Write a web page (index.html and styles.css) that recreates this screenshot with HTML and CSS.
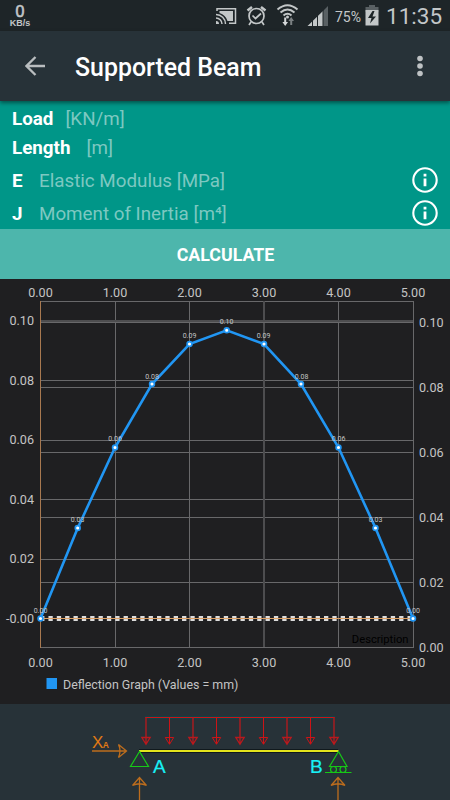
FILE: index.html
```html
<!DOCTYPE html>
<html lang="en">
<head>
    <meta charset="UTF-8">
    <meta name="viewport" content="width=device-width, initial-scale=1.0">
    <title>Supported Beam</title>
    <link rel="stylesheet" href="styles.css">
</head>
<body>
    <div class="status-bar">
        <svg class="net-speed" width="40" height="31" viewBox="0 0 40 31">
            <text class="net-value" x="20" y="16.800">0</text>
            <text class="net-unit" x="20" y="26">KB/s</text>
        </svg>
        <div class="status-icons">
            <svg class="status-svg" width="128" height="32" viewBox="211 0 128 32">
                <!-- cast -->
                <g fill="none" stroke="#c3c7c8" stroke-width="1.5">
                    <path d="M217 11V8.7H235.500V23.300H229"/>
                    <path d="M216 14.500A9.500 9.500 0 0 1 225.500 24M216 18A6 6 0 0 1 222 24"/>
                </g>
                <path d="M216 21A3 3 0 0 1 219 24H216ZM219.500 11H233V21H227.500A12 12 0 0 0 219.500 13Z" fill="#c3c7c8"/>
                <!-- alarm -->
                <g fill="none" stroke="#c3c7c8" stroke-width="1.700">
                    <circle cx="256.500" cy="16" r="7.500"/>
                    <path d="M252.500 15.500L255.500 18.500L261 13.500M251 22L249 25M262 22L264 25"/>
                    <path d="M247.500 10.500L252 7M265.500 10.500L261 7" stroke-width="2.500"/>
                </g>
                <!-- wifi -->
                <g fill="none" stroke="#c3c7c8" stroke-width="2">
                    <path d="M277.500 9.500Q287.500 1 297.500 9.500M280.500 12.500Q287.500 6.500 294.500 12.500M283.500 15.500Q287.500 12 291.500 15.500"/>
                </g>
                <circle cx="287.500" cy="17" r="1.500" fill="#c3c7c8"/>
                <path d="M284.200 17.500H286.200V22H288L285.200 26L282.400 22H284.200Z" fill="#d5d8d9"/>
                <path d="M290.200 25V21H288.400L291.200 17L294 21H292.200V25Z" fill="#7b8082"/>
                <!-- signal -->
                <path d="M307.500 26L323 11V26Z" fill="#c3c7c8"/>
                <path d="M323 11L328 6V26H323Z" fill="#596063"/>
                <path d="M312.500 19V26M317.500 15V26M323 10V26" stroke="#1e2528" stroke-width="1"/>
            </svg>
            <span class="battery-text">75%</span>
            <svg class="battery" width="14" height="21" viewBox="0 0 14 21">
                <path d="M4 0H10V2H13.500V7H.5V2H4Z" fill="#596063"/>
                <path d="M.5 5H13.500V20.500H.5Z" fill="#c3c7c8"/>
                <path d="M7.500 6L3 13H6.500L5 18.500L11 11.500H7.500L9.500 6Z" fill="#1e2528"/>
            </svg>
            <span class="clock">11:35</span>
        </div>
    </div>

    <header class="toolbar">
        <svg class="back-icon" width="21" height="20" viewBox="0 0 21 20">
            <path d="M20 10H2M10.500 1L1.500 10L10.500 19" fill="none" stroke="#b9bdbf" stroke-width="2.300"/>
        </svg>
        <h1>Supported Beam</h1>
        <svg class="menu-icon" width="6" height="22" viewBox="0 0 6 22">
            <g fill="#bec2c4">
                <circle cx="3" cy="3.500" r="2.800"/>
                <circle cx="3" cy="11" r="2.800"/>
                <circle cx="3" cy="18.500" r="2.800"/>
            </g>
        </svg>
    </header>

    <div class="params">
        <div class="param-row">
            <span class="param-name">Load</span>
            <span class="param-hint">[KN/m]</span>
        </div>
        <div class="param-row length">
            <span class="param-name">Length</span>
            <span class="param-hint">[m]</span>
        </div>
        <div class="param-row tall">
            <span class="param-name">E</span>
            <span class="param-hint">Elastic Modulus [MPa]</span>
            <svg class="info" width="26" height="26" viewBox="0 0 26 26">
                <circle cx="13" cy="13" r="11.700" fill="none" stroke="#fff" stroke-width="2.100"/>
                <path d="M11.600 6.700H14.400V9.500H11.600ZM11.600 11.500H14.400V19.300H11.600Z" fill="#fff"/>
            </svg>
        </div>
        <div class="param-row tall">
            <span class="param-name">J</span>
            <span class="param-hint">Moment of Inertia [m⁴]</span>
            <svg class="info" width="26" height="26" viewBox="0 0 26 26">
                <circle cx="13" cy="13" r="11.700" fill="none" stroke="#fff" stroke-width="2.100"/>
                <path d="M11.600 6.700H14.400V9.500H11.600ZM11.600 11.500H14.400V19.300H11.600Z" fill="#fff"/>
            </svg>
        </div>
    </div>

    <button class="calculate">CALCULATE</button>

    <svg class="chart" width="450" height="425" viewBox="0 279 450 425">
        <g class="grid">
            <path d="M40 301.500H413M40 380.500H413M40 440.500H413M40 499.500H413M40 559.500H413"/>
            <path d="M40 387.500H413M40 452.500H413M40 517.500H413M40 582.500H413M40 647.500H413"/>
            <path d="M115.500 301V647M189.500 301V647M338.500 301V647M413.500 301V648"/>
            <path class="thick" d="M40 321H413M264 301V647"/>
            <path d="M40 322.500H413"/>
        </g>
        <path class="axis" d="M40.500 301V648"/>
        <path class="zero-dash" d="M40.100 618.500H413"/>
        <path class="zero-line" d="M40 618.500H413"/>
        <text class="description" x="408.500" y="643">Description</text>

        <polyline class="curve" points="40.500,618.500 77.700,528 115,447.500 152,384 189.500,344 226.700,330.300 264,344 301,384 338.500,447.500 375.500,528 413,618.500"/>
        <g class="points">
            <circle cx="40.500" cy="618.500" r="2.400"/>
            <circle cx="77.700" cy="528" r="2.400"/>
            <circle cx="115" cy="447.500" r="2.400"/>
            <circle cx="152" cy="384" r="2.400"/>
            <circle cx="189.500" cy="344" r="2.400"/>
            <circle cx="226.700" cy="330.300" r="2.400"/>
            <circle cx="264" cy="344" r="2.400"/>
            <circle cx="301" cy="384" r="2.400"/>
            <circle cx="338.500" cy="447.500" r="2.400"/>
            <circle cx="375.500" cy="528" r="2.400"/>
            <circle cx="413" cy="618.500" r="2.400"/>
        </g>
        <g class="values">
            <text x="40.500" y="613">0.00</text>
            <text x="77.500" y="522">0.03</text>
            <text x="115" y="441.300">0.06</text>
            <text x="152" y="378.500">0.08</text>
            <text x="189.500" y="338">0.09</text>
            <text x="226.500" y="324">0.10</text>
            <text x="263.500" y="338">0.09</text>
            <text x="301.500" y="378.500">0.08</text>
            <text x="338.500" y="441.300">0.06</text>
            <text x="375.500" y="522">0.03</text>
            <text x="413" y="613">0.00</text>
        </g>

        <g class="labels x-labels">
            <text x="40.500" y="296.500">0.00</text>
            <text x="115" y="296.500">1.00</text>
            <text x="189.500" y="296.500">2.00</text>
            <text x="264" y="296.500">3.00</text>
            <text x="338.500" y="296.500">4.00</text>
            <text x="413" y="296.500">5.00</text>
            <text x="40.500" y="666.500">0.00</text>
            <text x="115" y="666.500">1.00</text>
            <text x="189.500" y="666.500">2.00</text>
            <text x="264" y="666.500">3.00</text>
            <text x="338.500" y="666.500">4.00</text>
            <text x="413" y="666.500">5.00</text>
        </g>
        <g class="labels left-labels">
            <text x="34" y="325">0.10</text>
            <text x="34" y="384.500">0.08</text>
            <text x="34" y="444">0.06</text>
            <text x="34" y="503.500">0.04</text>
            <text x="34" y="563">0.02</text>
            <text x="34" y="622.500">-0.00</text>
        </g>
        <g class="labels">
            <text x="419" y="326.500">0.10</text>
            <text x="419" y="391.500">0.08</text>
            <text x="419" y="456.500">0.06</text>
            <text x="419" y="521.500">0.04</text>
            <text x="419" y="586.500">0.02</text>
            <text x="419" y="651.500">0.00</text>
        </g>
        <rect x="46.500" y="678" width="10.500" height="11" fill="#2196f3"/>
        <text class="legend" x="63" y="688.500">Deflection Graph (Values = mm)</text>
    </svg>

    <svg class="beam" width="450" height="96" viewBox="0 704 450 96">
        <defs>
            <g id="load-arrow">
                <path d="M0 717V744M-4.200 737.500H4.200L0 744.300Z"/>
            </g>
            <g id="reaction">
                <path d="M0 778V800M-7 785.500L0 777.500L7 785.500Q0 782 -7 785.500Z"/>
            </g>
        </defs>
        <path class="load-edge" d="M145 716.500H335M147 718.500H333"/>
        <g class="load">
            <path d="M145.500 717.500H334.500"/>
            <use href="#load-arrow" x="146" class="wide"/>
            <use href="#load-arrow" x="169.500"/>
            <use href="#load-arrow" x="193" class="wide"/>
            <use href="#load-arrow" x="216.500"/>
            <use href="#load-arrow" x="240" class="wide"/>
            <use href="#load-arrow" x="263.500"/>
            <use href="#load-arrow" x="287" class="wide"/>
            <use href="#load-arrow" x="310.500"/>
            <use href="#load-arrow" x="334" class="wide"/>
        </g>
        <path d="M139 751H338" stroke="#10191d" stroke-width="4"/>
        <path d="M139 751H338.500" stroke="#e4e41c" stroke-width="2"/>
        <g class="support">
            <path d="M139.500 751.500L130.500 766.500H148.500Z"/>
            <path d="M338.500 751.500L329.500 766.500H347L338.500 751.500M325 772.500H351.500"/>
            <circle cx="333.500" cy="769.500" r="3"/>
            <circle cx="343" cy="769.500" r="3"/>
        </g>
        <g class="reaction">
            <path d="M92 751H126M118.500 744.500L126.500 751L118.500 757.500Q121.500 751 118.500 744.500Z"/>
            <use href="#reaction" x="139.500"/>
            <use href="#reaction" x="338"/>
        </g>
        <text class="reaction-name" x="92" y="748">X<tspan class="sub" dx="-.5">A</tspan></text>
        <text class="node-name" x="153" y="773">A</text>
        <text class="node-name" x="310" y="773">B</text>
    </svg>
</body>
</html>
```
FILE: styles.css
```css
body {
    font-family: Roboto, sans-serif;
    margin: 0;
    padding: 0;
    background-color: #273238;
    color: #fff;
    overflow: hidden;
}

svg {
    display: block;
    flex-shrink: 0;
}

.status-bar {
    display: flex;
    justify-content: space-between;
    height: 31px;
    background-color: #1e2528;
    color: #c3c7c8;
}

.net-speed {
    fill: #c3c7c8;
    font-family: "Liberation Sans", sans-serif;
    text-anchor: middle;
}

.net-value {
    font-size: 16px;
    stroke: #c3c7c8;
    stroke-width: 0.6;
}

.net-unit {
    font-size: 9px;
    font-weight: bold;
}

.status-icons {
    display: flex;
    align-items: center;
    width: 239px;
}

.status-svg {
    margin-right: -4px;
}

.battery-text {
    width: 31px;
    font-size: 14px;
    padding-top: 2px;
}

.battery {
    margin: 0 7px 0 -1px;
}

.clock {
    font-size: 22.5px;
    white-space: nowrap;
    padding-top: 1px;
}

.toolbar {
    display: flex;
    align-items: center;
    height: 70px;
    padding: 0 27px 0 25px;
    box-shadow: 0 2px 4px rgba(0, 0, 0, 0.45);
    position: relative;
}

.toolbar h1 {
    flex: 1;
    margin: 3px 0 0 29px;
    font-size: 24.9px;
    font-weight: 500;
}

.params {
    height: 124px;
    padding: 4px 12px 0;
    background-color: #009688;
    font-size: 18.8px;
}

.param-row {
    display: flex;
    align-items: center;
    height: 28px;
}

.length {
    height: 30px;
}

.tall {
    height: 33px;
}

.param-name {
    font-weight: bold;
}

.param-hint {
    color: #7dc8c1;
    margin-left: 12px;
}

.length .param-hint {
    margin-left: 16px;
}

.tall span {
    padding-top: 2px;
}

.tall .param-name {
    width: 15px;
}

.tall .param-hint {
    flex: 1;
}

.calculate {
    display: block;
    width: 450px;
    height: 50px;
    padding: 0 0 0 1px;
    border: 0;
    background-color: #4db6ac;
    color: #fff;
    font: bold 17.8px Roboto, sans-serif;
}

.chart {
    background-color: #1f1f21;
}

.grid {
    fill: none;
    stroke: #68686a;
    stroke-width: 1;
}

.grid .thick {
    stroke: #4d4d4f;
    stroke-width: 2;
}

.axis {
    stroke: #a87950;
}

.zero-dash {
    stroke: #dcdcdc;
    stroke-width: 5;
    stroke-dasharray: 4.3 4.05;
}

.zero-line {
    stroke: #dda064;
}

.curve {
    fill: none;
    stroke: #2196f3;
    stroke-width: 2.6;
}

.points {
    fill: #fff;
    stroke: #2196f3;
    stroke-width: 1.7;
}

.values {
    fill: #c4c4c4;
    font-size: 7px;
    text-anchor: middle;
}

.labels {
    fill: #c4c4c4;
    font-size: 12.6px;
}

.x-labels {
    text-anchor: middle;
}

.left-labels {
    text-anchor: end;
}

.description {
    fill: #000;
    font-size: 11.2px;
    text-anchor: end;
}

.legend {
    fill: #c4c4c4;
    font-size: 12.4px;
}

.load-edge {
    stroke: #0f4348;
}

.load {
    fill: none;
    stroke: #cc1417;
}

.load .wide {
    stroke: #b9191d;
    stroke-width: 1.3;
}

.support {
    fill: none;
    stroke: #17c817;
    stroke-width: 1.2;
}

.reaction {
    fill: none;
    stroke: #bd6d1d;
    stroke-width: 1.3;
}

.reaction-name {
    fill: #e07a14;
    font: 17px "Liberation Sans", sans-serif;
}

.sub {
    font-size: 8.5px;
    font-weight: bold;
}

.node-name {
    fill: #18f0f5;
    stroke: #18f0f5;
    stroke-width: 0.2;
    font: 19px "Liberation Sans", sans-serif;
}
```
